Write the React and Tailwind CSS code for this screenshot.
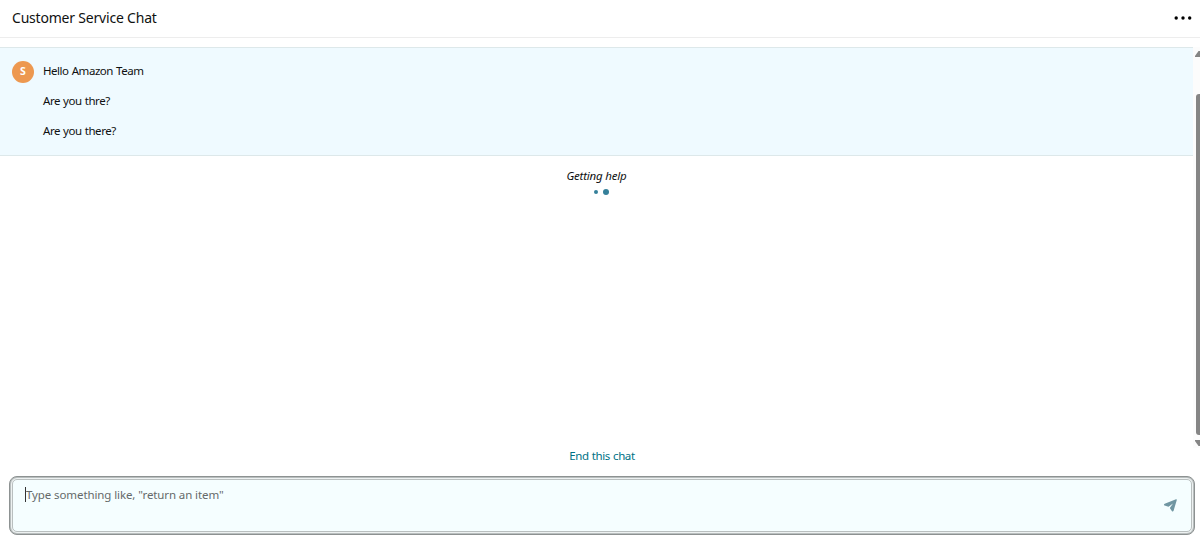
const messages = ['Hello Amazon Team', 'Are you thre?', 'Are you there?'];

function Header() {
  return (
    <header className="flex h-[38px] shrink-0 items-center justify-between border-b border-[#ededed] pl-3 pr-2 pb-[2px]">
      <h1 className="text-[14px] leading-5 tracking-[-0.2px]">Customer Service Chat</h1>
      <button aria-label="More options">
        <svg className="h-[4px] w-[18px]" viewBox="0 0 18 4">
          <circle cx="2.2" cy="2" r="1.7" />
          <circle cx="9" cy="2" r="1.7" />
          <circle cx="15.7" cy="2" r="1.7" />
        </svg>
      </button>
    </header>
  );
}

function Scrollbar() {
  return (
    <div className="flex w-[7px] shrink-0 flex-col overflow-hidden bg-[#fcfcfc] pl-[2px] pt-[4px]">
      <svg className="h-[6px] w-[10px] shrink-0" viewBox="0 0 10 6">
        <path d="M0 6 L0 5 L3.5 0 H6 L10 5 V6Z" fill="#858585" />
      </svg>
      <div className="mt-[37px] ml-[0.5px] h-[341px] w-[10px] shrink-0 rounded-[3px] bg-[#858585]" />
      <svg className="mt-[5px] h-[6px] w-[10px] shrink-0" viewBox="0 0 10 6">
        <path d="M0 0 H10 V1 L6 6 H3.5 L0 1Z" fill="#858585" />
      </svg>
    </div>
  );
}

export default function App() {
  return (
    <div className="flex h-[539px] w-[1200px] flex-col overflow-hidden bg-white font-['Noto_Sans',sans-serif] text-[#0f1111]">
      <Header />
      <main className="mt-[9px] flex h-[401px] shrink-0">
        <section className="flex min-w-0 flex-1 flex-col">
          <div className="flex h-[109px] shrink-0 gap-[9px] border-y border-[#dde8ea] bg-[#effaff] pl-3 pt-[13px]">
            <div className="flex size-[22px] items-center justify-center rounded-full bg-[#ed9850] text-[10.5px] font-bold text-white">S</div>
            <div className="flex flex-col gap-[14px] pt-[2px]">
              {messages.map((text) => (
                <p key={text} className="text-[11.5px] leading-4 tracking-[-0.46px] [word-spacing:0.6px] whitespace-nowrap">{text}</p>
              ))}
            </div>
          </div>
          <div className="flex flex-col items-center pt-3">
            <p className="text-[11.5px] leading-4 tracking-[-0.2px] italic">Getting help</p>
            <div className="mt-[5px] ml-[9px] flex items-center gap-[5px]">
              <span className="size-[4px] rounded-full bg-[#35809a]" />
              <span className="size-[6px] rounded-full bg-[#35809a]" />
            </div>
          </div>
        </section>
        <Scrollbar />
      </main>
      <button className="ml-[4px] w-[1196px] shrink-0 text-center text-[11.5px] leading-4 tracking-[-0.4px] text-[#007185] [word-spacing:0.5px]">End this chat</button>
      <div className="mt-3 ml-[9px] h-[59px] w-[1186px] shrink-0 rounded-[8px] border border-[#8d9292] bg-[#b9bfbf] p-px">
        <div className="h-full rounded-[6px] bg-[#edf1f1] p-px">
          <div className="flex h-full justify-between rounded-[5px] border border-[#b9bfbf] bg-[#f5feff] pl-[12px] pr-[13px]">
            <div className="flex pt-[7px]">
              <span className="h-[15px] w-px bg-[#333]" />
              <span className="text-[11.5px] leading-4 tracking-[-0.1px] text-[#656a6a]">Type something like, "return an item"</span>
            </div>
            <svg className="mt-[18px] size-[15px]" viewBox="0 0 15 15" fill="#7096a2">
              <path d="M13 1.2 Q14 1 13.8 2 L10.6 12.7 Q9.8 14 8.8 12.9 L6.8 10 L10 5.6 L5.5 8.8 L1.6 7.6 Q0.2 6.8 1.7 5.8 Z" />
            </svg>
          </div>
        </div>
      </div>
    </div>
  );
}
